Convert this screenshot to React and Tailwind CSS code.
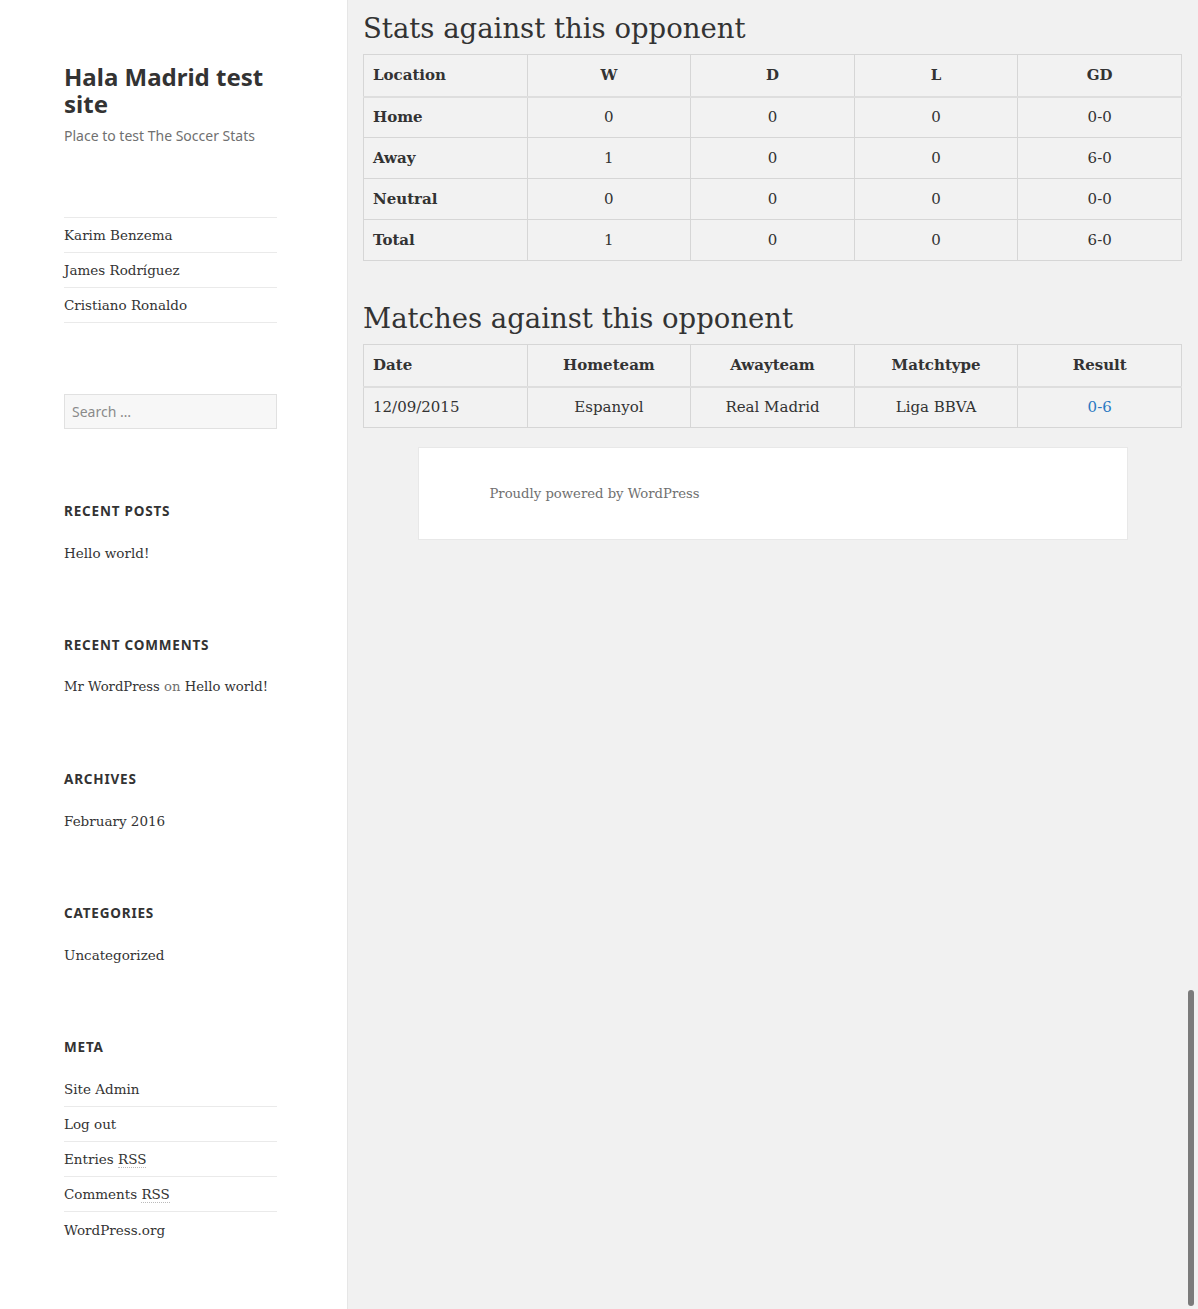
import React from "react"

const serif = "font-['DejaVu_Serif','Liberation_Serif',serif]"
const sans = "font-['Noto_Sans','Open_Sans',sans-serif]"

const stats = [
  ["Home", "0", "0", "0", "0-0"],
  ["Away", "1", "0", "0", "6-0"],
  ["Neutral", "0", "0", "0", "0-0"],
  ["Total", "1", "0", "0", "6-0"]
]

const matches = [["12/09/2015", "Espanyol", "Real Madrid", "Liga BBVA", "0-6"]]

export default function App() {
  return (
    <div className={`relative flex min-h-[1309px] text-[#333] ${serif}`}>
      <Sidebar />
      <main className="flex-1 bg-[#f1f1f1] pl-[15px] pr-[16px]">
        <h2 className="pt-[8px] mb-[6px] text-[27.5px] leading-[40px] text-[#333]">Stats against this opponent</h2>
        <Table
          head={["Location", "W", "D", "L", "GD"]}
          rows={stats}
          boldFirst
        />
        <h2 className="mt-[37px] mb-[6px] text-[27.5px] leading-[40px] text-[#333]">Matches against this opponent</h2>
        <Table
          head={["Date", "Hometeam", "Awayteam", "Matchtype", "Result"]}
          rows={matches}
          linkLast
        />
        <footer className="mx-auto mt-[19px] w-[710px] h-[93px] bg-white border border-[#e8e8e8] flex items-center pl-[71px]">
          <span className="text-[13.2px] text-[#707070]">Proudly powered by WordPress</span>
        </footer>
      </main>
      {/* overlay scrollbar */}
      <div className="absolute right-[4px] top-[990px] w-[6px] h-[316px] rounded-full bg-[#7b7b7b]" />
    </div>
  )
}

function Table({ head, rows, boldFirst, linkLast }) {
  return (
    <table className="w-full table-fixed border-collapse text-[15px] bg-[#f2f2f2]">
      <thead>
        <tr className="h-[42px] border-b-2 border-[#dedede]">
          {head.map((h, i) => (
            <th
              key={h}
              className={`border border-[#d6d6d6] font-bold px-[9px] ${i === 0 ? "text-left" : "text-center"}`}
            >
              {h}
            </th>
          ))}
        </tr>
      </thead>
      <tbody>
        {rows.map(r => (
          <tr key={r[0]} className="h-[41px]">
            {r.map((c, i) => (
              <td
                key={i}
                className={`border border-[#d6d6d6] px-[9px] ${i === 0 ? "text-left" : "text-center"} ${
                  i === 0 && boldFirst ? "font-bold" : ""
                }`}
              >
                {linkLast && i === r.length - 1 ? <a className="text-[#2b79c2]">{c}</a> : c}
              </td>
            ))}
          </tr>
        ))}
      </tbody>
    </table>
  )
}

function Sidebar() {
  return (
    <aside className="w-[348px] shrink-0 bg-white border-r border-[#e6e6e6] pl-[64px] pr-[70px] pt-[63px]">
      <h1 className={`${sans} text-[24px] leading-[27px] font-bold text-[#333]`}>Hala Madrid test site</h1>
      <p className={`${sans} mt-[10px] text-[14px] leading-[18px] text-[#707070]`}>Place to test The Soccer Stats</p>

      <ul className="mt-[72px] text-[13.5px] border-t border-[#eaeaea]">
        {["Karim Benzema", "James Rodríguez", "Cristiano Ronaldo"].map(n => (
          <li key={n} className="h-[35px] flex items-center border-b border-[#eaeaea]">{n}</li>
        ))}
      </ul>

      <div className="mt-[71px] h-[35px] border border-[#e1e1e1] bg-[#f7f7f7] flex items-center px-[7px]">
        <span className={`${sans} text-[14px] text-[#8a8a8a]`}>Search …</span>
      </div>

      <Widget title="RECENT POSTS" className="mt-[73px]">
        <div>Hello world!</div>
      </Widget>
      <Widget title="RECENT COMMENTS">
        <div className="whitespace-nowrap text-[13.2px]">
          Mr WordPress <span className="text-[#707070]">on</span> Hello world!
        </div>
      </Widget>
      <Widget title="ARCHIVES">
        <div>February 2016</div>
      </Widget>
      <Widget title="CATEGORIES">
        <div>Uncategorized</div>
      </Widget>
      <Widget title="META">
        <ul>
          {[
            ["Site Admin"],
            ["Log out"],
            ["Entries ", "RSS"],
            ["Comments ", "RSS"],
            ["WordPress.org"]
          ].map((item, i) => (
            <li
              key={i}
              className={`h-[35px] flex items-center ${i < 4 ? "border-b border-[#eaeaea]" : ""} ${i === 0 ? "-mt-[8px]" : ""}`}
            >
              <span className="whitespace-pre">
                {item[0]}
                {item[1] && <abbr className="no-underline border-b border-dotted border-[#bbb]">{item[1]}</abbr>}
              </span>
            </li>
          ))}
        </ul>
      </Widget>
    </aside>
  )
}

function Widget({ title, children, className = "mt-[74px]" }) {
  return (
    <section className={`${className} text-[13.5px]`}>
      <h2 className={`${sans} text-[13.5px] font-bold tracking-[0.06em] leading-[18px] text-[#333]`}>{title}</h2>
      <div className="mt-[24px] leading-[18px]">{children}</div>
    </section>
  )
}
